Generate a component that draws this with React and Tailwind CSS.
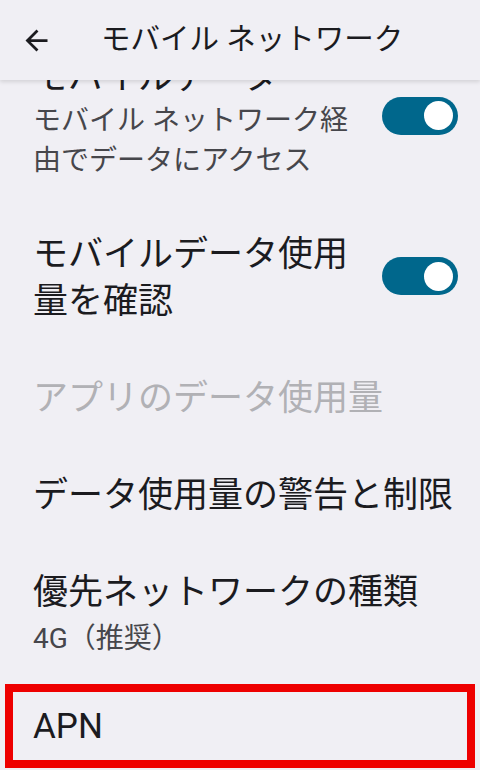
import React from 'react';

// Settings screen: mobile network preferences (scrolled slightly)
const font = { fontFamily: 'Roboto, "Noto Sans CJK JP", sans-serif' };

function Toggle() {
  return (
    <div className="w-[76px] h-[38px] rounded-full bg-[#00678c] flex items-center justify-end pr-[5px] shrink-0 -mt-[4px]">
      <div className="w-[29px] h-[29px] rounded-full bg-white" />
    </div>
  );
}

function Row({ title, subtitle, disabled, toggle, subClass = '' }) {
  return (
    <div className="flex items-center pl-[33px] pr-[22px] py-[25px]">
      <div className={toggle ? 'w-[324px]' : 'flex-1'}>
        <div
          className={`text-[35px] leading-[47px] ${disabled ? 'text-[#b1b1b5]' : 'text-[#1b1b1f]'}`}
        >
          {title}
        </div>
        {subtitle && (
          <div className={`text-[28px] leading-[40px] text-[#46464b] ${subClass}`}>{subtitle}</div>
        )}
      </div>
      {toggle && <div className="flex-1" />}
      {toggle && <Toggle />}
    </div>
  );
}

export default function App() {
  return (
    <div className="w-[480px] h-[770px] overflow-hidden bg-[#f0eff4] flex flex-col" style={font}>
      {/* Top app bar */}
      <div className="relative z-10 h-[80px] shrink-0 bg-[#f0eff4] flex items-center shadow-[0_2px_4px_rgba(0,0,0,0.12)]">
        <div className="w-[101px] flex items-center pl-[20px]">
          <svg width="33" height="33" viewBox="0 0 24 24" fill="#1b1b1f">
            <path d="M20 11H7.83l5.59-5.59L12 4l-8 8 8 8 1.41-1.41L7.83 13H20v-2z" />
          </svg>
        </div>
        <div className="text-[29.5px] text-[#1b1b1f] leading-none">モバイル ネットワーク</div>
      </div>

      {/* Preference list */}
      <div className="-mt-[51px] flex flex-col">
        <Row title="モバイルデータ" subtitle="モバイル ネットワーク経由でデータにアクセス" toggle />
        <Row title="モバイルデータ使用量を確認" toggle />
        <Row title="アプリのデータ使用量" disabled />
        <Row title="データ使用量の警告と制限" />
        <Row title="優先ネットワークの種類" subtitle="4G（推奨）" subClass="mt-[3px]" />
        <div className="mx-[5px] h-[84px] border-[8px] border-[#ee0000] flex items-center pl-[20px]">
          <div className="text-[35px] leading-[47px] text-[#1b1b1f]">APN</div>
        </div>
      </div>
    </div>
  );
}
